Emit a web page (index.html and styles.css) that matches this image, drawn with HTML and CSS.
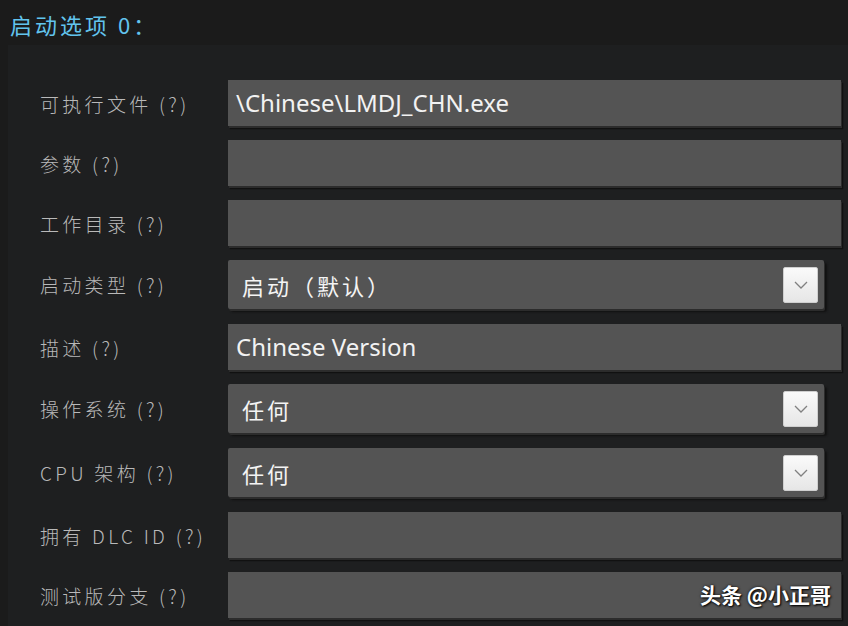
FILE: index.html
```html
<!DOCTYPE html>
<html lang="zh-CN">
<head>
    <meta charset="UTF-8">
    <title>启动选项</title>
    <link rel="stylesheet" href="styles.css">
</head>
<body>
    <div class="page">
        <h2 class="section-title">启动选项 0：</h2>

        <div class="panel">
            <div class="row">
                <div class="label">可执行文件 (?)</div>
                <div class="field">\Chinese\LMDJ_CHN.exe</div>
            </div>
            <div class="row">
                <div class="label">参数 (?)</div>
                <div class="field"></div>
            </div>
            <div class="row">
                <div class="label">工作目录 (?)</div>
                <div class="field"></div>
            </div>
            <div class="row row-select">
                <div class="label">启动类型 (?)</div>
                <div class="select">
                    <span class="select-value">启动（默认）</span>
                    <span class="select-btn">
                        <svg width="16" height="10" viewBox="0 0 16 10"><path d="M2 2 L8 8 L14 2" fill="none" stroke="#808080" stroke-width="1.3"/></svg>
                    </span>
                </div>
            </div>
            <div class="row">
                <div class="label">描述 (?)</div>
                <div class="field">Chinese Version</div>
            </div>
            <div class="row row-select">
                <div class="label">操作系统 (?)</div>
                <div class="select">
                    <span class="select-value">任何</span>
                    <span class="select-btn">
                        <svg width="16" height="10" viewBox="0 0 16 10"><path d="M2 2 L8 8 L14 2" fill="none" stroke="#808080" stroke-width="1.3"/></svg>
                    </span>
                </div>
            </div>
            <div class="row row-select">
                <div class="label">CPU 架构 (?)</div>
                <div class="select">
                    <span class="select-value">任何</span>
                    <span class="select-btn">
                        <svg width="16" height="10" viewBox="0 0 16 10"><path d="M2 2 L8 8 L14 2" fill="none" stroke="#808080" stroke-width="1.3"/></svg>
                    </span>
                </div>
            </div>
            <div class="row">
                <div class="label">拥有 DLC ID (?)</div>
                <div class="field"></div>
            </div>
            <div class="row">
                <div class="label">测试版分支 (?)</div>
                <div class="field">
                    <span class="watermark">头条 @小正哥</span>
                </div>
            </div>
        </div>
    </div>
</body>
</html>
```

FILE: styles.css
```css
* {
    margin: 0;
    padding: 0;
    box-sizing: border-box;
}

body {
    background: #1b1b1b;
    font-family: "Noto Sans", "Noto Sans CJK SC", sans-serif;
    overflow: hidden;
}

.page {
    width: 848px;
    height: 626px;
    position: relative;
}

.section-title {
    font-family: "Noto Sans CJK SC", sans-serif;
    font-size: 22px;
    font-weight: 400;
    color: #62c4ee;
    letter-spacing: 3px;
    padding: 8px 0 0 10px;
    height: 45px;
}

.panel {
    margin-left: 8px;
    background: #1e1f20;
    height: 581px;
    padding-top: 35px;
}

.row {
    display: flex;
    align-items: center;
    height: 46px;
    margin-bottom: 14px;
}

.row-select {
    height: 49px;
    margin-bottom: 15px;
}

.label {
    width: 220px;
    padding-left: 32px;
    font-family: "Noto Sans CJK SC", sans-serif;
    font-size: 19px;
    font-weight: 300;
    color: #b9b9b9;
    letter-spacing: 3.3px;
    white-space: nowrap;
}

.field {
    position: relative;
    width: 613px;
    height: 46px;
    background: #545454;
    box-shadow: 1px 2px 0 #2c2c2c, 2px 3px 1px #111;
    color: #f2f2f2;
    font-size: 24px;
    line-height: 46px;
    padding-left: 8px;
}

.select {
    width: 596px;
    height: 49px;
    background: #545454;
    border-radius: 2px;
    box-shadow: 1px 2px 0 #2c2c2c, 3px 3px 2px #111;
    display: flex;
    align-items: center;
    justify-content: space-between;
    padding: 0 6px 0 14px;
    color: #f4f4f4;
    font-family: "Noto Sans CJK SC", sans-serif;
    font-size: 22px;
    letter-spacing: 3px;
}

.select-btn {
    width: 35px;
    height: 36px;
    background: linear-gradient(#fafafa, #e6e6e6);
    border: 1px solid #cfcfcf;
    border-radius: 2px;
    display: flex;
    align-items: center;
    justify-content: center;
}

.watermark {
    position: absolute;
    right: 10px;
    top: -1px;
    font-family: "Noto Sans CJK SC", sans-serif;
    font-size: 21px;
    font-weight: 700;
    color: #ffffff;
    letter-spacing: 0;
    text-shadow: 1px 1px 2px #000, 0 0 3px rgba(0, 0, 0, 0.7);
}
```
